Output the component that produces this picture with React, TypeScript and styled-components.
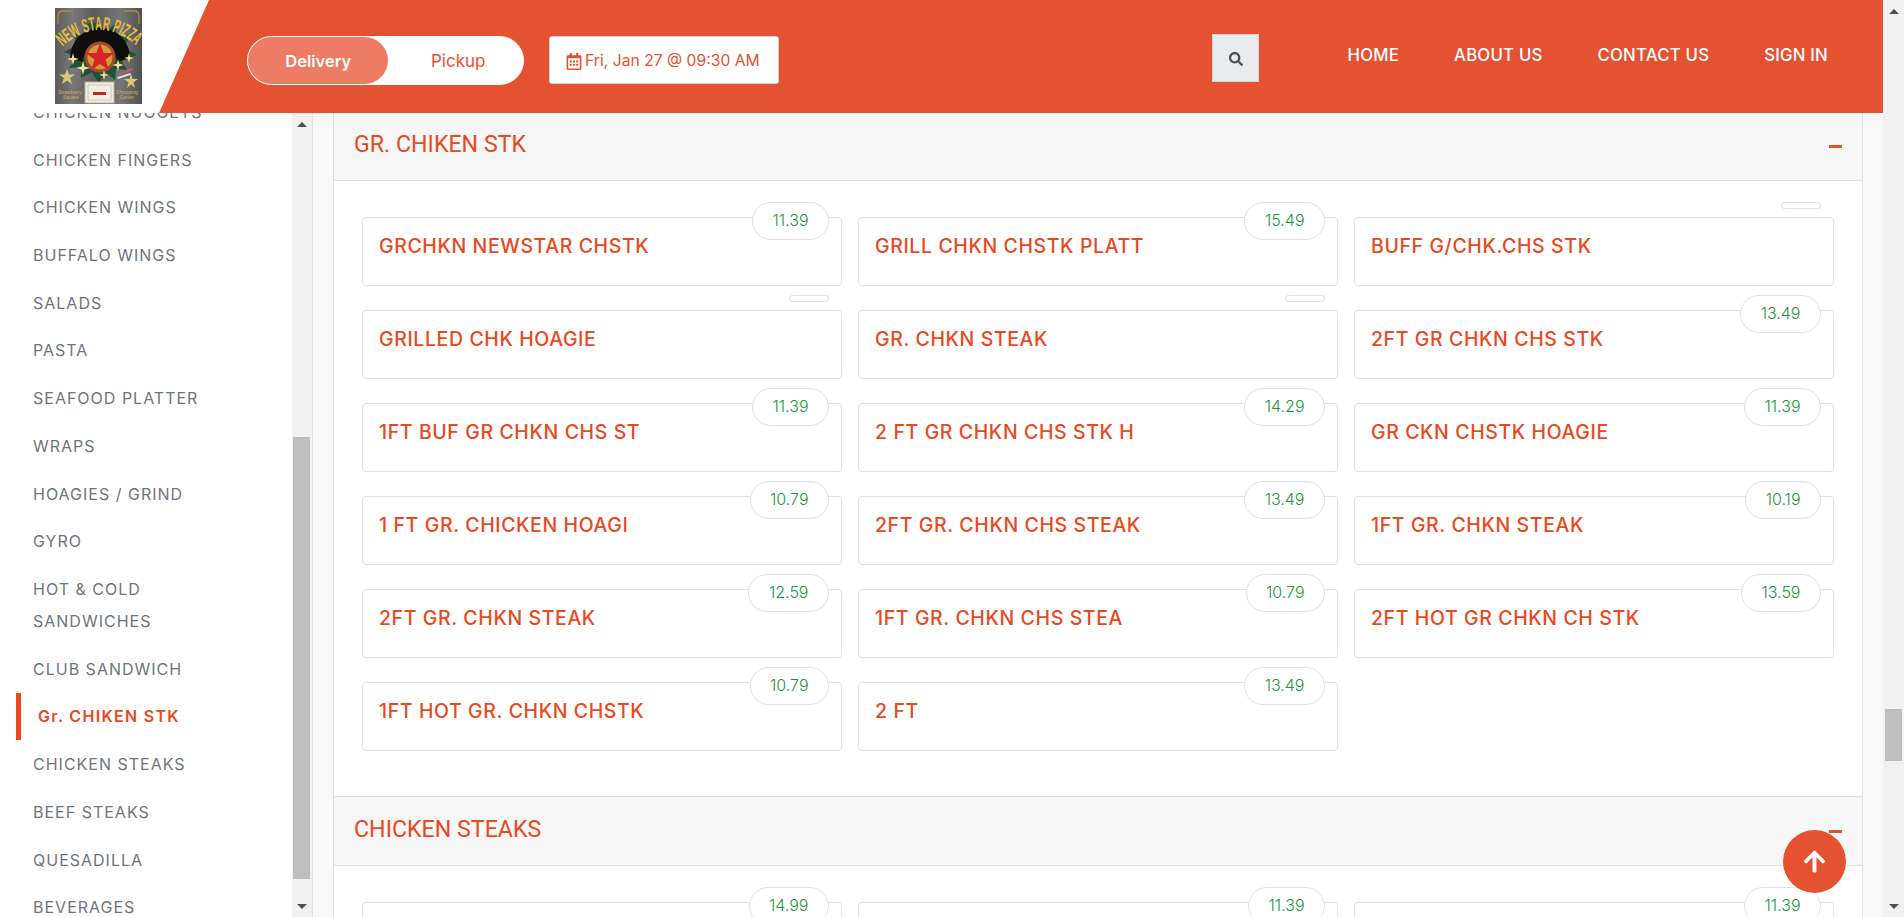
import { ReactElement } from 'react';
import styled, { createGlobalStyle } from 'styled-components';
import { FaArrowUp, FaRegCalendarAlt, FaSearch } from 'react-icons/fa';

const GlobalStyle = createGlobalStyle`
  html, body {
    margin: 0;
    padding: 0;
    height: 100%;
    overflow: hidden;
    background: #f8f8f8;
    font-family: Inter, "Liberation Sans", sans-serif;
  }
  * { box-sizing: border-box; }
`;

const Shell = styled.div`
  display: flex;
  width: 1904px;
  height: 917px;
  overflow: hidden;
`;

const Page = styled.div`
  flex: 1;
  min-width: 0;
  display: flex;
  flex-direction: column;
`;

const Header = styled.header`
  position: relative;
  z-index: 2;
  flex: none;
  display: flex;
  height: 113px;
  background: #fff;
`;

const LogoCell = styled.div`
  flex: none;
  width: 159px;
  padding: 8px 0 0 55px;
`;

const Bar = styled.div`
  flex: 1;
  display: flex;
  align-items: flex-start;
  padding: 0 55px 0 88px;
  background: #e55231;
  clip-path: polygon(50px 0, 100% 0, 100% 100%, 0 100%);
`;

const Toggle = styled.div`
  display: flex;
  width: 277px;
  height: 49px;
  margin-top: 36px;
  border: 1px solid #fff;
  border-radius: 25px;
  background: #fff;
`;

const ToggleTab = styled.div<{ $active?: boolean }>`
  display: flex;
  align-items: center;
  justify-content: center;
  width: ${(p) => (p.$active ? '141px' : '135px')};
  padding-left: ${(p) => (p.$active ? '0' : '5px')};
  border-radius: 24px;
  background: ${(p) => (p.$active ? '#ee7b63' : 'transparent')};
  color: ${(p) => (p.$active ? '#fff' : '#e55231')};
  font-size: ${(p) => (p.$active ? '16.5px' : '17px')};
  font-weight: ${(p) => (p.$active ? 600 : 400)};
`;

const DateBox = styled.div`
  display: flex;
  align-items: center;
  gap: 3px;
  width: 230px;
  height: 48px;
  margin: 36px 0 0 25px;
  padding-left: 16px;
  border: 1px solid #ced4da;
  border-radius: 3px;
  background: #fff;
  color: #e55231;
  font-size: 15.7px;
  white-space: nowrap;

  svg {
    flex: none;
    width: 16px;
    height: 17px;
    margin-top: 3px;
  }
`;

const SearchButton = styled.div`
  display: flex;
  align-items: center;
  justify-content: center;
  width: 47px;
  height: 48px;
  margin: 34px 88px 0 auto;
  padding-top: 1px;
  border: 1px solid #ced4da;
  background: #e9ecef;
  color: #495057;
  font-size: 14px;
`;

const Nav = styled.nav`
  display: flex;
  gap: 55px;
  margin-top: 44px;
`;

const NavLink = styled.a`
  color: #fff;
  font-size: 16.8px;
  font-weight: 500;
  letter-spacing: 0.2px;
  line-height: 22px;
  white-space: nowrap;
`;

const Content = styled.div`
  flex: 1;
  min-height: 0;
  display: flex;
`;

const Sidebar = styled.aside`
  flex: none;
  display: flex;
  width: 313px;
  background: #fff;
  overflow: hidden;
`;

const MenuList = styled.ul`
  flex: 1;
  margin: -25px 0 0;
  padding: 0 0 0 16px;
  list-style: none;
`;

const MenuItem = styled.li<{ $active?: boolean }>`
  padding: 7.87px 60px 7.87px 17px;
  border-left: ${(p) => (p.$active ? '5px solid #e8491d' : '0')};
  color: ${(p) => (p.$active ? '#e8491d' : '#6f757c')};
  font-size: 16px;
  font-weight: ${(p) => (p.$active ? 600 : 400)};
  letter-spacing: ${(p) => (p.$active ? '1.3px' : '1px')};
  line-height: 32px;
`;

const ScrollTrack = styled.div<{ $width: number; $page?: boolean }>`
  flex: none;
  display: flex;
  flex-direction: column;
  align-items: center;
  width: ${(p) => p.$width}px;
  padding: 9px ${(p) => (p.$page ? '0' : '1px')} 8px 0;
  background: #f1f1f1;
  border-right: ${(p) => (p.$page ? '0' : '1px solid #e3e3e3')};
`;

const ScrollThumb = styled.div<{ $offset: number; $height: number }>`
  flex: none;
  width: 17px;
  height: ${(p) => p.$height}px;
  margin-top: ${(p) => p.$offset}px;
  background: #bfbfbf;
`;

const ScrollArrow = styled.div<{ $down?: boolean }>`
  flex: none;
  width: 0;
  height: 0;
  margin-top: ${(p) => (p.$down ? 'auto' : '0')};
  border-left: 5px solid transparent;
  border-right: 5px solid transparent;
  border-top: ${(p) => (p.$down ? '5px solid #505050' : '0')};
  border-bottom: ${(p) => (p.$down ? '0' : '5px solid #505050')};
`;

const Main = styled.main`
  flex: 1;
  min-width: 0;
  margin-top: -2px;
  padding: 0 20px;
`;

const Panel = styled.div`
  background: #fff;
  border-left: 1px solid #dee2e6;
  border-right: 1px solid #dee2e6;
`;

const SectionHead = styled.div`
  display: flex;
  align-items: center;
  justify-content: space-between;
  height: 70px;
  padding: 0 20px;
  background: #f7f7f7;
  border-top: 1px solid #dee2e6;
  border-bottom: 1px solid #dee2e6;
`;

const SectionTitle = styled.h2`
  margin: 0 0 3px;
  color: #e8491d;
  font-family: Roboto, "Liberation Sans", sans-serif;
  font-size: 23.2px;
  font-weight: 400;
  line-height: 1;
`;

const Minus = styled.span`
  width: 13px;
  height: 3px;
  background: #e55231;
`;

const SectionBody = styled.div`
  display: grid;
  grid-template-columns: repeat(3, 1fr);
  column-gap: 16px;
  row-gap: 24px;
  padding: 36px 28px 45px;
`;

const Card = styled.div`
  position: relative;
  height: 69px;
  padding: 15px 16px 0;
  background: #fff;
  border: 1px solid #dee2e6;
  border-radius: 4px;
`;

const CardTitle = styled.div`
  color: #e8491d;
  font-size: 19.5px;
  font-weight: 500;
  letter-spacing: 0.6px;
  line-height: 26px;
`;

const Price = styled.span<{ $empty?: boolean }>`
  position: absolute;
  top: -16px;
  right: 12px;
  min-width: ${(p) => (p.$empty ? '40px' : '0')};
  height: ${(p) => (p.$empty ? '7px' : '38px')};
  padding: 0 ${(p) => (p.$empty ? '0' : '19.5px')};
  border: 1px solid #dee2e6;
  border-radius: ${(p) => (p.$empty ? '4px' : '19px')};
  background: #fff;
  color: #1a9640;
  font-size: 16px;
  font-weight: 300;
  line-height: 34px;
  text-align: center;
`;

const ToTop = styled.a`
  position: fixed;
  left: 1783px;
  top: 830px;
  z-index: 3;
  display: flex;
  align-items: center;
  justify-content: center;
  width: 63px;
  height: 63px;
  border-radius: 50%;
  background: #e55231;
  color: #fff;
  font-size: 25px;
`;

const Sparkle = ({ x, y, r }: { x: number; y: number; r: number }): ReactElement => (
  <path
    d={`M${x} ${y - r}L${x + r / 5} ${y - r / 5}L${x + r} ${y}L${x + r / 5} ${y + r / 5}L${x} ${y + r}L${x - r / 5} ${y + r / 5}L${x - r} ${y}L${x - r / 5} ${y - r / 5}Z`}
    fill="#f7e49a"
  />
);

function Logo(): ReactElement {
  return (
    <svg width="87" height="96" viewBox="0 0 87 96" aria-label="New Star Pizza">
      <defs>
        <linearGradient id="wood" x1="0" y1="0" x2="1" y2="0">
          <stop offset="0" stopColor="#5a5a5a" />
          <stop offset="0.2" stopColor="#787878" />
          <stop offset="0.45" stopColor="#5c5c5c" />
          <stop offset="0.75" stopColor="#767676" />
          <stop offset="1" stopColor="#505050" />
        </linearGradient>
        <path id="arc" d="M6 40 Q45 4 84 40" fill="none" />
      </defs>
      <rect width="87" height="96" fill="url(#wood)" />
      <path d="M3 16V8q0-5 5-5h10M84 16V8q0-5-5-5H69" stroke="#a88b3c" strokeWidth="1.3" fill="none" />
      <polygon
        points="43,14 50,24 60,16 62,29 76,26 69,40 82,47 67,53 72,62 61,61 60,72 50,64 44,76 37,64 26,70 27,59 14,60 22,49 9,44 22,37 18,25 30,29 32,16"
        fill="#1f5239"
      />
      <path d="M15 50 A30 30 0 0 1 75 50 L62 54 A17 17 0 0 0 28 54 Z" fill="#0e0e0e" />
      <text fontSize="19" fontWeight="700" fill="#e7bb3e" fontFamily="Liberation Sans Narrow, Liberation Sans, sans-serif">
        <textPath href="#arc" startOffset="2" textLength="82" lengthAdjust="spacingAndGlyphs">NEW STAR PIZZA</textPath>
      </text>
      <circle cx="45" cy="49" r="15.5" fill="#a9482a" />
      <circle cx="45" cy="49" r="12.5" fill="#d39a3c" />
      <polygon points="45,35 48.6,45 59,45 50.6,51.5 53.6,62 45,56 36.4,62 39.4,51.5 31,45 41.4,45" fill="#d8232a" />
      <polygon points="12,61 14,66.5 20,66.5 15,70 17,76 12,72.5 7,76 9,70 4,66.5 10,66.5" fill="#d9c778" />
      <polygon points="76,66 77.5,71 83,71 78.5,74.5 80,80 76,76.5 72,80 73.5,74.5 69,71 74.5,71" fill="#d9c778" />
      <Sparkle x={18} y={51} r={6} />
      <Sparkle x={28} y={60} r={7} />
      <Sparkle x={63} y={57} r={6} />
      <Sparkle x={74} y={50} r={5} />
      <Sparkle x={49} y={67} r={5} />
      <rect x="66" y="62" width="12" height="2" fill="#e3485a" transform="rotate(-18 72 63)" />
      <rect x="62" y="67" width="14" height="2" fill="#e6e6e6" transform="rotate(-18 69 68)" />
      <rect x="30" y="74" width="29" height="21" fill="#f1eee4" stroke="#b9b39c" />
      <rect x="33" y="77" width="23" height="15" fill="none" stroke="#a9a389" strokeWidth="0.5" />
      <rect x="38" y="84" width="13" height="3" fill="#c9242b" />
      <text x="3" y="86" fontSize="5" fill="#c9ae55" fontFamily="Liberation Sans Narrow, Liberation Sans, sans-serif" textLength="24" lengthAdjust="spacingAndGlyphs">Strawberry</text>
      <text x="8" y="91" fontSize="5" fill="#c9ae55" fontFamily="Liberation Sans Narrow, Liberation Sans, sans-serif" textLength="16" lengthAdjust="spacingAndGlyphs">Square</text>
      <text x="61" y="86" fontSize="5" fill="#c9ae55" fontFamily="Liberation Sans Narrow, Liberation Sans, sans-serif" textLength="22" lengthAdjust="spacingAndGlyphs">Shopping</text>
      <text x="65" y="91" fontSize="5" fill="#c9ae55" fontFamily="Liberation Sans Narrow, Liberation Sans, sans-serif" textLength="14" lengthAdjust="spacingAndGlyphs">Center</text>
    </svg>
  );
}

type Item = { title?: string; price?: string };

const menu = [
  'CHICKEN NUGGETS',
  'CHICKEN FINGERS',
  'CHICKEN WINGS',
  'BUFFALO WINGS',
  'SALADS',
  'PASTA',
  'SEAFOOD PLATTER',
  'WRAPS',
  'HOAGIES / GRIND',
  'GYRO',
  'HOT & COLD SANDWICHES',
  'CLUB SANDWICH',
  'Gr. CHIKEN STK',
  'CHICKEN STEAKS',
  'BEEF STEAKS',
  'QUESADILLA',
  'BEVERAGES',
];

const chicken: Item[] = [
  { title: 'GRCHKN NEWSTAR CHSTK', price: '11.39' },
  { title: 'GRILL CHKN CHSTK PLATT', price: '15.49' },
  { title: 'BUFF G/CHK.CHS STK' },
  { title: 'GRILLED CHK HOAGIE' },
  { title: 'GR. CHKN STEAK' },
  { title: '2FT GR CHKN CHS STK', price: '13.49' },
  { title: '1FT BUF GR CHKN CHS ST', price: '11.39' },
  { title: '2 FT GR CHKN CHS STK H', price: '14.29' },
  { title: 'GR CKN CHSTK HOAGIE', price: '11.39' },
  { title: '1 FT GR. CHICKEN HOAGI', price: '10.79' },
  { title: '2FT GR. CHKN CHS STEAK', price: '13.49' },
  { title: '1FT GR. CHKN STEAK', price: '10.19' },
  { title: '2FT GR. CHKN STEAK', price: '12.59' },
  { title: '1FT GR. CHKN CHS STEA', price: '10.79' },
  { title: '2FT HOT GR CHKN CH STK', price: '13.59' },
  { title: '1FT HOT GR. CHKN CHSTK', price: '10.79' },
  { title: '2 FT', price: '13.49' },
];

const steaks: Item[] = [{ price: '14.99' }, { price: '11.39' }, { price: '11.39' }];

function Section({ title, items }: { title: string; items: Item[] }): ReactElement {
  return (
    <>
      <SectionHead>
        <SectionTitle>{title}</SectionTitle>
        <Minus />
      </SectionHead>
      <SectionBody>
        {items.map((item, i) => (
          <Card key={i}>
            <Price $empty={!item.price}>{item.price}</Price>
            {item.title && <CardTitle>{item.title}</CardTitle>}
          </Card>
        ))}
      </SectionBody>
    </>
  );
}

export default function App(): ReactElement {
  return (
    <Shell>
      <GlobalStyle />
      <Page>
        <Header>
          <LogoCell>
            <Logo />
          </LogoCell>
          <Bar>
            <Toggle>
              <ToggleTab $active>Delivery</ToggleTab>
              <ToggleTab>Pickup</ToggleTab>
            </Toggle>
            <DateBox>
              <FaRegCalendarAlt />
              Fri, Jan 27 @ 09:30 AM
            </DateBox>
            <SearchButton>
              <FaSearch />
            </SearchButton>
            <Nav>
              <NavLink>HOME</NavLink>
              <NavLink>ABOUT US</NavLink>
              <NavLink>CONTACT US</NavLink>
              <NavLink>SIGN IN</NavLink>
            </Nav>
          </Bar>
        </Header>
        <Content>
          <Sidebar>
            <MenuList>
              {menu.map((name) => (
                <MenuItem key={name} $active={name === 'Gr. CHIKEN STK'}>
                  {name}
                </MenuItem>
              ))}
            </MenuList>
            <ScrollTrack $width={21}>
              <ScrollArrow />
              <ScrollThumb $offset={310} $height={442} />
              <ScrollArrow $down />
            </ScrollTrack>
          </Sidebar>
          <Main>
            <Panel>
              <Section title="GR. CHIKEN STK" items={chicken} />
              <Section title="CHICKEN STEAKS" items={steaks} />
            </Panel>
          </Main>
        </Content>
      </Page>
      <ScrollTrack $width={21} $page>
        <ScrollArrow />
        <ScrollThumb $offset={695} $height={52} />
        <ScrollArrow $down />
      </ScrollTrack>
      <ToTop>
        <FaArrowUp />
      </ToTop>
    </Shell>
  );
}
